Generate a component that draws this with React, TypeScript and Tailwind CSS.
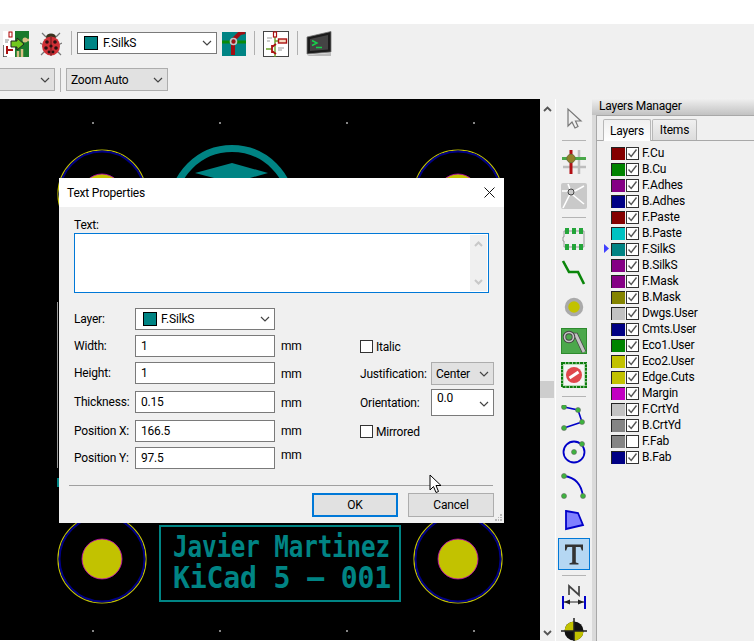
import React from 'react';

const layers = [
  { name: 'F.Cu', color: 'bg-[#840000]', on: true },
  { name: 'B.Cu', color: 'bg-[#008400]', on: true },
  { name: 'F.Adhes', color: 'bg-[#840084]', on: true },
  { name: 'B.Adhes', color: 'bg-[#000084]', on: true },
  { name: 'F.Paste', color: 'bg-[#840000]', on: true },
  { name: 'B.Paste', color: 'bg-[#00c2c2]', on: true },
  { name: 'F.SilkS', color: 'bg-[#008484]', on: true, active: true },
  { name: 'B.SilkS', color: 'bg-[#840084]', on: true },
  { name: 'F.Mask', color: 'bg-[#840084]', on: true },
  { name: 'B.Mask', color: 'bg-[#848400]', on: true },
  { name: 'Dwgs.User', color: 'bg-[#c2c2c2]', on: true },
  { name: 'Cmts.User', color: 'bg-[#000084]', on: true },
  { name: 'Eco1.User', color: 'bg-[#008400]', on: true },
  { name: 'Eco2.User', color: 'bg-[#c2c200]', on: true },
  { name: 'Edge.Cuts', color: 'bg-[#c2c200]', on: true },
  { name: 'Margin', color: 'bg-[#c200c2]', on: true },
  { name: 'F.CrtYd', color: 'bg-[#c2c2c2]', on: true },
  { name: 'B.CrtYd', color: 'bg-[#848484]', on: true },
  { name: 'F.Fab', color: 'bg-[#848484]', on: false },
  { name: 'B.Fab', color: 'bg-[#000084]', on: true },
];

const Chevron = () => (
  <svg width="10" height="6" viewBox="0 0 10 6" className="shrink-0">
    <path d="M1 1 L5 5 L9 1" fill="none" stroke="#444" strokeWidth="1.2" />
  </svg>
);

const Check = () => (
  <svg width="11" height="11" viewBox="0 0 11 11">
    <path d="M1.5 5.5 L4.2 8.5 L9.5 1.5" fill="none" stroke="#555" strokeWidth="1.4" />
  </svg>
);

const NetlistIcon = () => (
  <svg width="26" height="26" viewBox="0 0 26 26">
    <rect width="26" height="26" fill="#fff" />
    <path d="M12 0 H26 V26 H12 Z" fill="#1b7a2c" />
    <path d="M15 26 V20 M19 26 V18 M21 9 H26" stroke="#d9bf84" strokeWidth="2.5" />
    <circle cx="22" cy="9" r="2.5" fill="#d9bf84" />
    <path d="M0 14 V26 H4" fill="none" stroke="#444" strokeWidth="1.5" />
    <rect x="6" y="1" width="3" height="5" fill="#fff" stroke="#a00" />
    <path d="M4 15 V23 M4 19 H10" stroke="#a11" strokeWidth="2" />
    <path d="M2 9 H6 M2 11 H5" stroke="#888" />
    <path d="M8 10 H14 V7 L21 13 L14 19 V16 H8 Z" fill="#72c81e" stroke="#222" strokeWidth="1" />
  </svg>
);

const LadybugIcon = () => (
  <svg width="22" height="26" viewBox="0 0 22 26">
    <path d="M6 6 L2 2 M16 6 L20 2 M4 14 L0 12 M18 14 L22 12 M5 20 L1 24 M17 20 L21 24" stroke="#777" strokeWidth="1.2" />
    <ellipse cx="11" cy="6" rx="5" ry="3.5" fill="#3a3320" />
    <ellipse cx="11" cy="15" rx="9" ry="9.5" fill="#cf3036" />
    <path d="M11 6 V25" stroke="#6b1a1c" />
    <g fill="#2a1212">
      <circle cx="7" cy="11" r="1.8" />
      <circle cx="15" cy="11" r="1.8" />
      <circle cx="6" cy="17" r="1.8" />
      <circle cx="16" cy="17" r="1.8" />
      <circle cx="11" cy="15" r="1.6" />
      <circle cx="9" cy="21" r="1.4" />
      <circle cx="13" cy="21" r="1.4" />
    </g>
  </svg>
);

const ViaSwapIcon = () => (
  <svg width="24" height="24" viewBox="0 0 24 24">
    <rect width="24" height="24" fill="#008484" />
    <rect y="8.5" width="24" height="3" fill="#0a8a0a" />
    <path d="M23 0 L18 1 L12 7 L11 12 L11 23" fill="none" stroke="#a00f14" strokeWidth="4" />
    <circle cx="11.5" cy="9.5" r="3" fill="none" stroke="#c8c8c8" strokeWidth="1.6" />
  </svg>
);

const SchematicIcon = () => (
  <svg width="26" height="26" viewBox="0 0 26 26">
    <rect x="0.5" y="0.5" width="25" height="25" fill="#fff" stroke="#444" />
    <path d="M12 5 V21 M12 10 H16 M3 18 H9 M12 21 V26" stroke="#6aa02a" strokeWidth="1.4" />
    <rect x="10.5" y="1" width="3" height="5" fill="#fff" stroke="#a11" strokeWidth="1.2" />
    <rect x="15.5" y="8" width="8" height="4" fill="#f6d9c0" stroke="#a11" strokeWidth="1.4" />
    <path d="M9 14 V22 M9 16 L13 13 M9 20 L13 23" stroke="#a11" strokeWidth="1.8" fill="none" />
    <path d="M4 7 H9 M4 10 H7 M15 17 H21 M15 19 H19" stroke="#999" />
  </svg>
);

const TerminalIcon = () => (
  <svg width="26" height="26" viewBox="0 0 26 26">
    <path d="M1 6 L25 0.5 V21 L1 23 Z" fill="#1c1c1c" stroke="#777" strokeWidth="0.8" />
    <path d="M4 8 L22 4 V18.5 L4 20 Z" fill="#444" />
    <path d="M6 9.5 L11 12 L6 14.5 M10 16.5 H16" fill="none" stroke="#17d24a" strokeWidth="1.4" />
    <path d="M1 24 L25 22 V25 H3 Z" fill="#bbb" />
  </svg>
);

const CursorIcon = () => (
  <svg width="26" height="26" viewBox="0 0 26 26">
    <path d="M7 4 V21 L11 17 L14 23 L17 21.5 L14.5 16 L20 16 Z" fill="#f0f0f0" stroke="#777" strokeWidth="1.2" />
  </svg>
);

const PadGridIcon = () => (
  <svg width="26" height="26" viewBox="0 0 26 26">
    <path d="M18 1 V25 M2 18 H25" stroke="#bdbdbd" strokeWidth="2.5" />
    <path d="M1 9.5 H25" stroke="#4aa84a" strokeWidth="3" />
    <path d="M10 1 V25" stroke="#b20f14" strokeWidth="3" />
    <circle cx="10" cy="9.5" r="4.2" fill="#92822a" stroke="#6e6e3a" />
  </svg>
);

const RatsnestIcon = () => (
  <svg width="26" height="26" viewBox="0 0 26 26">
    <rect width="26" height="26" rx="2" fill="#c9c9c9" />
    <path d="M10 9 L2 25 M12 9 L23 3 M1 8 H7 M12 12 L23 21 M9 6 L7 1" stroke="#fff" strokeWidth="1.6" />
    <circle cx="10" cy="9" r="3" fill="#c9c9c9" stroke="#444" />
  </svg>
);

const FootprintIcon = () => (
  <svg width="26" height="26" viewBox="0 0 26 26">
    <path d="M3 5 H23 V21 H3 V15 H2 V11 H3 Z" fill="none" stroke="#999" />
    <g fill="#24a53a">
      <rect x="4" y="2" width="4" height="6" />
      <rect x="11" y="2" width="4" height="6" />
      <rect x="18" y="2" width="4" height="6" />
      <rect x="4" y="18" width="4" height="6" />
      <rect x="11" y="18" width="4" height="6" />
      <rect x="18" y="18" width="4" height="6" />
    </g>
  </svg>
);

const TrackIcon = () => (
  <svg width="26" height="26" viewBox="0 0 26 26">
    <path d="M2 1 L8 12 H17 L23 24" fill="none" stroke="#0b860b" strokeWidth="2.6" />
  </svg>
);

const ViaIcon = () => (
  <svg width="20" height="20" viewBox="0 0 20 20">
    <circle cx="10" cy="10" r="7.5" fill="#c2c200" stroke="#aaa" strokeWidth="3.5" />
  </svg>
);

const ZoneIcon = () => (
  <svg width="26" height="26" viewBox="0 0 26 26">
    <rect x="0.5" y="0.5" width="25" height="25" fill="#4ba84b" stroke="#2d8a2d" />
    <path d="M9 7 H15 L23 24" fill="none" stroke="#444" strokeWidth="4.5" />
    <path d="M9 7 H15 L23 24" fill="none" stroke="#c4c4c4" strokeWidth="3" />
    <circle cx="8" cy="9" r="4.5" fill="#4ba84b" stroke="#444" strokeWidth="3.4" />
    <circle cx="8" cy="9" r="4.5" fill="none" stroke="#c4c4c4" strokeWidth="1.6" />
  </svg>
);

const KeepoutIcon = () => (
  <svg width="26" height="26" viewBox="0 0 26 26">
    <rect x="1" y="1" width="24" height="24" fill="#fff" stroke="#0d7d0d" strokeWidth="2" strokeDasharray="3 0.6" />
    <rect x="2.5" y="2.5" width="21" height="21" fill="#f4f4f4" stroke="#7fc07f" strokeWidth="1" strokeDasharray="1 1" />
    <circle cx="13" cy="13" r="8" fill="#e0484c" />
    <path d="M8.5 16 L17.5 10" stroke="#fff" strokeWidth="3" />
  </svg>
);

const PolylineIcon = () => (
  <svg width="26" height="26" viewBox="0 0 26 26">
    <path d="M3 2 L17 5 L21 17 L3 23" fill="none" stroke="#0000c8" strokeWidth="1.6" />
    <g fill="#3cb43c" stroke="#666" strokeWidth="0.6">
      <circle cx="3" cy="2" r="2.5" />
      <circle cx="17" cy="5" r="2.5" />
      <circle cx="21" cy="17" r="2.5" />
      <circle cx="3" cy="23" r="2.5" />
    </g>
  </svg>
);

const CircleIcon = () => (
  <svg width="26" height="26" viewBox="0 0 26 26">
    <circle cx="13" cy="13" r="10.5" fill="none" stroke="#0000c8" strokeWidth="1.8" />
    <circle cx="13" cy="13" r="2.5" fill="#3cb43c" stroke="#666" strokeWidth="0.6" />
    <circle cx="21" cy="5" r="2.5" fill="#3cb43c" stroke="#666" strokeWidth="0.6" />
  </svg>
);

const ArcIcon = () => (
  <svg width="26" height="26" viewBox="0 0 26 26">
    <path d="M3 3 Q20 5 22 24" fill="none" stroke="#0000c8" strokeWidth="1.8" />
    <circle cx="3" cy="3" r="2.5" fill="#3cb43c" stroke="#666" strokeWidth="0.6" />
    <circle cx="3" cy="23" r="2.5" fill="#3cb43c" stroke="#666" strokeWidth="0.6" />
    <circle cx="22" cy="23" r="2.5" fill="#3cb43c" stroke="#666" strokeWidth="0.6" />
  </svg>
);

const PolygonIcon = () => (
  <svg width="26" height="26" viewBox="0 0 26 26">
    <path d="M5 4 L17 6 L22 18 L5 22 Z" fill="#8080ff" stroke="#0000c8" strokeWidth="1.8" />
  </svg>
);

const TextIcon = () => (
  <svg width="24" height="24" viewBox="0 0 24 24">
    <path d="M3 2.5 H21 V8.5 H19.8 L18.5 5 H13.8 V20.5 L16.5 21.3 V22.5 H7.5 V21.3 L10.2 20.5 V5 H5.5 L4.2 8.5 H3 Z" fill="#333" />
  </svg>
);

const DimensionIcon = () => (
  <svg width="26" height="26" viewBox="0 0 26 26">
    <path d="M2 12 V25 M24 12 V25" stroke="#0000c8" strokeWidth="2" />
    <path d="M3 18 H23" stroke="#222" />
    <path d="M3 18 L9 15.5 V20.5 Z M23 18 L17 15.5 V20.5 Z" fill="#222" />
    <path d="M8 11 V2 L18 11 V2" fill="none" stroke="#444" strokeWidth="1.7" />
  </svg>
);

const TargetIcon = () => (
  <svg width="26" height="26" viewBox="0 0 26 26">
    <circle cx="13" cy="13" r="9.5" fill="#111" />
    <path d="M13 3.5 A9.5 9.5 0 0 0 3.5 13 H13 Z M13 22.5 A9.5 9.5 0 0 0 22.5 13 H13 Z" fill="#c2c200" />
    <path d="M13 0 V26 M0 13 H26" stroke="#222" strokeWidth="1.5" />
  </svg>
);

const ToolSep = ({ first }: { first?: boolean }) => (
  <div className={`flex items-center justify-center ${first ? 'h-[10px]' : 'h-[9px]'}`}>
    <div className="w-[24px] h-px bg-[#b4b4b4]" />
  </div>
);

const Tool = ({ children, active }: { children: React.ReactNode; active?: boolean }) => (
  <div className="h-[34px] flex items-center justify-center">
    {active ? (
      <div className="w-[32px] h-[32px] flex items-center justify-center bg-[#b5d7f3] border border-[#0078d7]">{children}</div>
    ) : (
      children
    )}
  </div>
);

const ToolbarSep = () => <div className="w-px h-[24px] bg-[#b0b0b0]" />;

const Pad = ({ cx, cy }: { cx: number; cy: number }) => (
  <g fill="none">
    <circle cx={cx} cy={cy} r="44" stroke="#c2c200" strokeWidth="1.2" />
    <circle cx={cx} cy={cy} r="42.5" stroke="#000084" strokeWidth="2" />
    <circle cx={cx} cy={cy} r="20" fill="#c2c200" stroke="#c200c2" strokeWidth="0.8" />
  </g>
);

const PcbDrawing = () => (
  <svg width="540" height="541" viewBox="0 99 540 541" className="absolute inset-0">
    {[92, 219, 346, 473].map((x) => (
      <g key={x} fill="#848484">
        <rect x={x} y="122" width="2" height="2" />
        <rect x={x} y="630" width="2" height="2" />
      </g>
    ))}
    <Pad cx={102} cy={194} />
    <Pad cx={458} cy={194} />
    <Pad cx={102} cy={559} />
    <Pad cx={458} cy={559} />
    <circle cx="232" cy="208" r="59.5" fill="none" stroke="#008484" strokeWidth="7" />
    <polygon points="195,173 232,163 268,173 250,178 214,178" fill="#008484" />
    <rect x="57" y="302" width="1" height="166" fill="#9a9a9a" />
    <rect x="57" y="478" width="2" height="9" fill="#008484" />
    <rect x="160" y="526" width="240" height="75" fill="none" stroke="#008484" strokeWidth="2" />
    <text fill="#008484" fontFamily="'DejaVu Sans Mono', monospace" fontWeight="700" fontSize="31">
      <tspan x="173" y="557" textLength="217" lengthAdjust="spacingAndGlyphs">Javier Martinez</tspan>
      <tspan x="173" y="588" textLength="218" lengthAdjust="spacingAndGlyphs">KiCad 5 — 001</tspan>
    </text>
  </svg>
);

const Field = ({ label, value, className, mmClass }: { label: string; value: string; className: string; mmClass: string }) => (
  <div className={`flex items-center h-[22px] ${className}`}>
    <span className="w-[61px]">{label}</span>
    <div className="w-[140px] h-[22px] bg-white border border-[#7a7a7a] pl-[5px] flex items-center">{value}</div>
    <span className={`ml-[6px] ${mmClass}`}>mm</span>
  </div>
);

const CheckRow = ({ label, className }: { label: string; className: string }) => (
  <div className={`flex items-center gap-[3px] h-[13px] ${className}`}>
    <div className="w-[13px] h-[13px] bg-white border border-[#333]" />
    <span>{label}</span>
  </div>
);

const TextDialog = () => (
  <div className="absolute left-[59px] top-[79px] w-[445px] h-[345px] bg-[#f0f0f0] flex flex-col text-black">
    <div className="h-[29px] bg-white flex items-center justify-between pl-[8px] pr-[9px] shrink-0">
      <span>Text Properties</span>
      <svg width="11" height="11" viewBox="0 0 11 11">
        <path d="M0.5 0.5 L10.5 10.5 M10.5 0.5 L0.5 10.5" stroke="#111" />
      </svg>
    </div>
    <div className="px-[15px] flex flex-col flex-1">
      <div className="h-[16px] mt-[10px] leading-[16px]">Text:</div>
      <div className="h-[60px] w-[415px] bg-white border border-[#0078d7] flex justify-end p-px">
        <div className="w-[17px] bg-[#f0f0f0] flex flex-col items-center justify-between py-[6px]">
          <svg width="9" height="6" viewBox="0 0 9 6"><path d="M1 5 L4.5 1.5 L8 5" fill="none" stroke="#c8c8c8" strokeWidth="2" /></svg>
          <svg width="9" height="6" viewBox="0 0 9 6"><path d="M1 1 L4.5 4.5 L8 1" fill="none" stroke="#c8c8c8" strokeWidth="2" /></svg>
        </div>
      </div>
      <div className="flex mt-[15px]">
        <div className="w-[286px] shrink-0">
          <div className="flex items-center h-[22px]">
            <span className="w-[61px]">Layer:</span>
            <div className="w-[140px] h-[22px] bg-white border border-[#7a7a7a] pl-[7px] pr-[4px] flex items-center">
              <div className="w-[14px] h-[14px] bg-[#008484] border border-black mr-[4px]" />
              <span className="flex-1">F.SilkS</span>
              <Chevron />
            </div>
          </div>
          <Field label="Width:" value="1" className="mt-[5px]" mmClass="" />
          <Field label="Height:" value="1" className="mt-[5px]" mmClass="mt-[2px]" />
          <Field label="Thickness:" value="0.15" className="mt-[7px]" mmClass="mt-[2px]" />
          <Field label="Position X:" value="166.5" className="mt-[7px]" mmClass="" />
          <Field label="Position Y:" value="97.5" className="mt-[5px]" mmClass="mb-[6px]" />
        </div>
        <div className="flex-1 pt-[32px]">
          <CheckRow label="Italic" className="" />
          <div className="flex items-center h-[23px] mt-[9px]">
            <span className="w-[71px]">Justification:</span>
            <div className="w-[63px] h-[23px] bg-[#e1e1e1] border border-[#adadad] pl-[4px] pr-[4px] flex items-center justify-between">
              <span>Center</span>
              <Chevron />
            </div>
          </div>
          <div className="flex items-center h-[27px] mt-[4px]">
            <span className="w-[71px]">Orientation:</span>
            <div className="w-[63px] h-[27px] bg-white border border-[#7a7a7a] pl-[5px] pr-[4px] flex justify-between">
              <span className="mt-[2px]">0.0</span>
              <div className="mt-[11px]"><Chevron /></div>
            </div>
          </div>
          <CheckRow label="Mirrored" className="mt-[9px]" />
        </div>
      </div>
      <div className="h-px bg-[#a0a0a0] mt-[16px] -mx-[5px] w-[424px]" />
      <div className="flex justify-end gap-[10px] mt-[7px] w-[420px]">
        <div className="w-[86px] h-[24px] bg-[#e1e1e1] border-2 border-[#0078d7] flex items-center justify-center">OK</div>
        <div className="w-[86px] h-[24px] bg-[#e1e1e1] border border-[#adadad] flex items-center justify-center">Cancel</div>
      </div>
    </div>
    <div className="absolute right-[2px] bottom-[2px] w-[7px] h-[7px] grid grid-cols-3 gap-px">
      <div className="col-start-3 bg-[#b8b8b8]" />
      <div className="col-start-2 bg-[#b8b8b8]" />
      <div className="bg-[#b8b8b8]" />
      <div className="bg-[#b8b8b8]" />
      <div className="bg-[#b8b8b8]" />
      <div className="bg-[#b8b8b8]" />
    </div>
    <svg width="14" height="20" viewBox="0 0 14 20" className="absolute left-[370px] top-[296px]">
      <path d="M1 1 V16 L4.5 12.5 L7 18.5 L9.5 17.5 L7 11.5 L12 11.5 Z" fill="#fff" stroke="#000" />
    </svg>
  </div>
);

const LayerRow = ({ layer }: { layer: (typeof layers)[number] }) => (
  <div className="h-[16px] flex items-center relative">
    {layer.active && (
      <svg width="5" height="9" viewBox="0 0 5 9" className="absolute left-[7px] top-[3px]">
        <path d="M0 0 L5 4.5 L0 9 Z" fill="#4040ff" />
      </svg>
    )}
    <div className={`ml-[14px] w-[14px] h-[13px] border-t border-l border-[#222] ${layer.color}`} />
    <div className="ml-px w-[13px] h-[13px] bg-white border border-[#333] flex items-center justify-center">
      {layer.on && <Check />}
    </div>
    <span className="ml-[3px]">{layer.name}</span>
  </div>
);

export default function App() {
  return (
    <div className="w-[754px] h-[641px] bg-white overflow-hidden flex flex-col text-[12px] tracking-[-0.2px] leading-none text-black [font-family:Roboto,sans-serif]">
      <div className="h-[24px] shrink-0" />

      <div className="h-[75px] shrink-0 bg-[#f0f0f0] flex flex-col">
        <div className="h-[44px] flex items-center pl-[3px] pb-[6px]">
          <div className="mt-[2px]"><NetlistIcon /></div>
          <div className="ml-[11px] mt-[2px]"><LadybugIcon /></div>
          <div className="ml-[9px]"><ToolbarSep /></div>
          <div className="ml-[5px] w-[140px] h-[22px] bg-white border border-[#7a7a7a] pl-[6px] pr-[4px] flex items-center">
            <div className="w-[14px] h-[14px] bg-[#008484] border border-black mr-[5px]" />
            <span className="flex-1">F.SilkS</span>
            <Chevron />
          </div>
          <div className="ml-[5px] mt-[2px]"><ViaSwapIcon /></div>
          <div className="ml-[8px]"><ToolbarSep /></div>
          <div className="ml-[8px] mt-[2px]"><SchematicIcon /></div>
          <div className="ml-[8px]"><ToolbarSep /></div>
          <div className="ml-[8px] mt-[2px]"><TerminalIcon /></div>
        </div>
        <div className="flex items-start">
          <div className="w-[55px] h-[23px] bg-[#e1e1e1] border border-[#adadad] border-l-0 flex items-center justify-end pr-[4px]">
            <Chevron />
          </div>
          <div className="ml-[5px]"><ToolbarSep /></div>
          <div className="ml-[5px] w-[102px] h-[23px] bg-[#e1e1e1] border border-[#adadad] pl-[4px] pr-[4px] flex items-center justify-between">
            <span>Zoom Auto</span>
            <Chevron />
          </div>
        </div>
      </div>

      <div className="flex-1 flex min-h-0">
        <div className="w-[540px] h-[541px] bg-black relative shrink-0">
          <PcbDrawing />
          <TextDialog />
        </div>

        <div className="w-[16px] shrink-0 bg-[#f0f0f0] border-r border-white flex flex-col items-center justify-between pt-[7px] pb-[5px] relative">
          <svg width="9" height="6" viewBox="0 0 9 6"><path d="M1 5 L4.5 1.5 L8 5" fill="none" stroke="#555" strokeWidth="1.8" /></svg>
          <div className="absolute left-0 top-[282px] w-[14px] h-[17px] bg-[#cdcdcd]" />
          <svg width="9" height="6" viewBox="0 0 9 6"><path d="M1 1 L4.5 4.5 L8 1" fill="none" stroke="#555" strokeWidth="1.8" /></svg>
        </div>

        <div className="w-[36px] shrink-0 bg-[#f0f0f0] pt-[2px] overflow-hidden">
          <Tool><CursorIcon /></Tool>
          <ToolSep first />
          <Tool><PadGridIcon /></Tool>
          <Tool><RatsnestIcon /></Tool>
          <ToolSep />
          <Tool><FootprintIcon /></Tool>
          <Tool><TrackIcon /></Tool>
          <Tool><ViaIcon /></Tool>
          <Tool><ZoneIcon /></Tool>
          <Tool><KeepoutIcon /></Tool>
          <ToolSep />
          <Tool><PolylineIcon /></Tool>
          <Tool><CircleIcon /></Tool>
          <Tool><ArcIcon /></Tool>
          <Tool><PolygonIcon /></Tool>
          <Tool active><TextIcon /></Tool>
          <ToolSep />
          <Tool><DimensionIcon /></Tool>
          <Tool><TargetIcon /></Tool>
        </div>

        <div className="flex-1 bg-[#f0f0f0] flex flex-col min-w-0">
          <div className="h-[17px] -mt-px shrink-0 flex items-start pt-[2px] pl-[7px] leading-[12px] bg-gradient-to-b from-[#f2f2f2] to-[#c2c2c2]">
            Layers Manager
          </div>
          <div className="flex-1 flex min-h-0">
            <div className="w-[4px] shrink-0 bg-[#dadada]" />
            <div className="flex-1 border-l border-t border-[#a8a8a8] flex flex-col min-w-0">
              <div className="h-[25px] flex items-end pl-[6px] border-b border-[#a8a8a8] shrink-0">
                <div className="w-[48px] h-[22px] bg-gradient-to-b from-[#f0f0f0] to-white border border-b-0 border-[#b8b8b8] rounded-t-[2px] flex items-center justify-center relative top-px">Layers</div>
                <div className="ml-px w-[45px] h-[21px] bg-gradient-to-b from-[#f0f0f0] to-[#dcdcdc] border border-b-0 border-[#b8b8b8] rounded-t-[2px] flex items-center justify-center">Items</div>
              </div>
              <div className="pt-[4px]">
                {layers.map((layer) => (
                  <LayerRow key={layer.name} layer={layer} />
                ))}
              </div>
            </div>
          </div>
        </div>
      </div>
    </div>
  );
}
